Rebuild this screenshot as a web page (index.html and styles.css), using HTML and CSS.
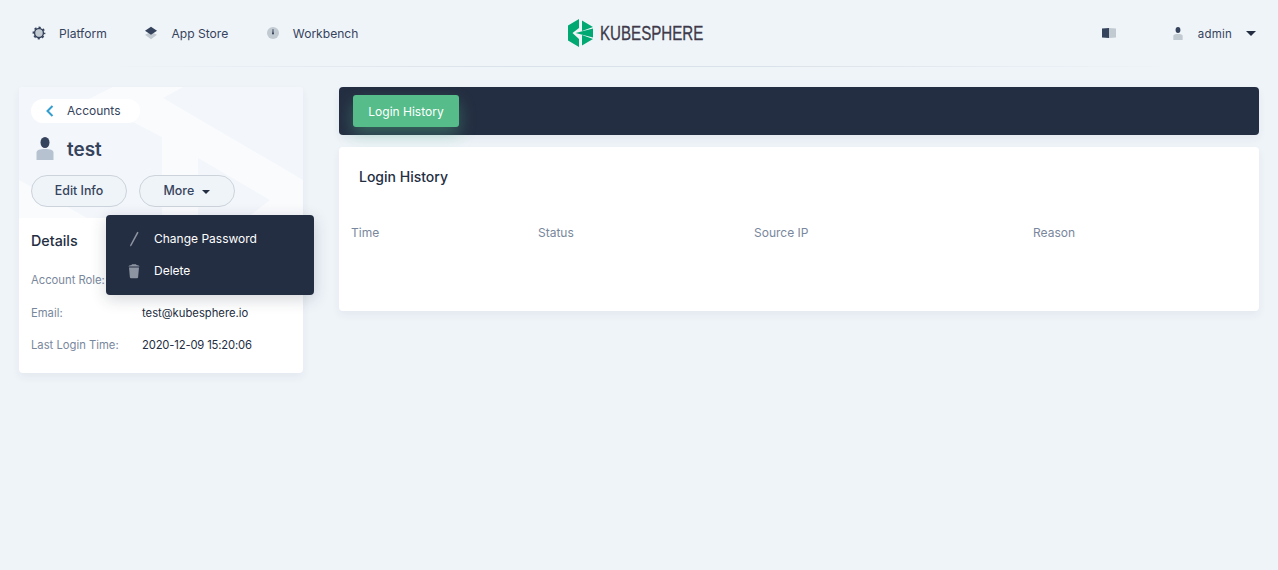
FILE: index.html
```html
<!DOCTYPE html>
<html lang="en">
<head>
<meta charset="utf-8">
<title>KubeSphere</title>
<link rel="stylesheet" href="styles.css">
</head>
<body>
<header class="topbar">
  <nav class="nav">
    <a class="nav-item">
      <svg class="nav-icon" viewBox="0 0 16 16"><circle cx="8" cy="8" r="3.600" fill="#c1c9d1"/><circle cx="8" cy="8" r="4.400" fill="none" stroke="#36435c" stroke-width="1.500"/><circle cx="8" cy="8" r="5.600" fill="none" stroke="#36435c" stroke-width="1.600" stroke-dasharray="2.200 2.198" stroke-dashoffset="1.100"/></svg>
      <span>Platform</span>
    </a>
    <a class="nav-item">
      <svg class="nav-icon" viewBox="0 0 16 16"><path d="M2 9.800 8 7l6 2.800L8 14.200z" fill="#c1c9d1"/><path d="M2 5.800 8 1.800l6 4L8 9.800z" fill="#36435c"/></svg>
      <span>App Store</span>
    </a>
    <a class="nav-item">
      <svg class="nav-icon" viewBox="0 0 16 16"><circle cx="8" cy="8" r="6" fill="#c1c9d1"/><path d="M7.600 4h.8l.300 4.800H7.300z" fill="#36435c"/><circle cx="8" cy="8.600" r="1" fill="#36435c"/></svg>
      <span>Workbench</span>
    </a>
  </nav>
  <div class="logo">
    <svg class="logo-mark" viewBox="0 0 25 28"><path d="M11 0v9L4.500 14 11 20v8L0 21.500v-15z" fill="#00a971"/><path d="M14 1.500 25 8 14 12zM7.500 14 25 9.500v9zM14 16l11 4-11 6.500z" fill="#00a971"/></svg>
    <span class="logo-text">KUBESPHERE</span>
  </div>
  <div class="user-area">
    <svg class="book-icon" viewBox="0 0 14 10"><path d="M0 .5 7 0v10l-7-.5z" fill="#36435c"/><path d="M7 0l7 .5v9L7 10z" fill="#c1c9d1"/></svg>
    <svg class="user-icon" viewBox="1 0 10 14"><ellipse cx="6" cy="3.200" rx="2.600" ry="3.200" fill="#36435c"/><path d="M1 14V9.500C1 8 3 7.500 6 7.500s5 .5 5 2V14z" fill="#c1c9d1"/></svg>
    <span class="user-name">admin</span>
    <span class="caret caret-dark"></span>
  </div>
</header>

<main class="page">
  <aside class="sidebar">
    <section class="profile">
      <svg class="watermark" viewBox="0 0 284 131">
        <path d="M94 0 70 12 114 35 143 50V131H179V71L251 113 228 131H284V93L144 11 164 0zM0 93 68 131H0z" fill="#fafbfd"/>
      </svg>
      <a class="back-pill">
        <svg class="back-icon" viewBox="0 0 8 12"><path d="M6.500 1 1.500 6l5 5" fill="none" stroke="#329dce" stroke-width="2"/></svg>
        <span>Accounts</span>
      </a>
      <div class="identity">
        <svg class="avatar" viewBox="0 0 18 23"><ellipse cx="9" cy="5.500" rx="4.500" ry="5.500" fill="#36435c"/><path d="M.500 23v-7.500C.500 13 4 12 9 12s8.500 1 8.500 3.500V23z" fill="#b6c2cf"/></svg>
        <h1 class="name">test</h1>
      </div>
      <div class="actions">
        <button class="btn">Edit Info</button>
        <button class="btn">More <span class="caret caret-small"></span></button>
      </div>
    </section>
    <section class="details">
      <h2 class="details-title">Details</h2>
      <dl class="detail-list">
        <div class="detail-row"><dt>Account Role:</dt><dd></dd></div>
        <div class="detail-row"><dt>Email:</dt><dd>test@kubesphere.io</dd></div>
        <div class="detail-row"><dt>Last Login Time:</dt><dd class="detail-date">2020-12-09 15:20:06</dd></div>
      </dl>
    </section>
    <div class="menu">
      <div class="menu-item">
        <svg class="menu-icon" viewBox="0 0 12 16"><path d="M9.200.8 10.600 1.500 3.400 14.800 2 15.400l.300-1.600z" fill="#8d95a3"/></svg>
        <span>Change Password</span>
      </div>
      <div class="menu-item">
        <svg class="menu-icon" viewBox="0 0 12 16"><path d="M4 1.200h4l.500.800C10 2.200 11.500 2.700 11.500 3.500H.500C.500 2.700 2 2.200 3.500 2z" fill="#8d95a3"/><path d="M1 4.500h10l-.900 9.800c-.100.600-.500.900-1.100.900H3c-.600 0-1-.300-1.100-.900z" fill="#8d95a3"/></svg>
        <span>Delete</span>
      </div>
    </div>
  </aside>

  <div class="content">
    <div class="tabs"><a class="tab">Login History</a></div>
    <section class="panel">
      <h2 class="panel-title">Login History</h2>
      <div class="table-head">
        <span>Time</span>
        <span>Status</span>
        <span>Source IP</span>
        <span>Reason</span>
      </div>
    </section>
  </div>
</main>
</body>
</html>
```

FILE: styles.css
```css
* { box-sizing: border-box; }
html, body { margin: 0; height: 100%; }
body {
  background: #eff4f9;
  font-family: Inter, "Liberation Sans", sans-serif;
  font-size: 12px;
  line-height: 20px;
  color: #242e42;
  overflow: hidden;
}
.topbar {
  height: 67px;
  display: grid;
  grid-template-columns: 1fr auto 1fr;
  align-items: center;
  border-bottom: 1px solid transparent;
  border-image: linear-gradient(90deg, rgba(209,215,223,0) 8%, #dbe1e8 40%, #dbe1e8 60%, rgba(209,215,223,0) 92%) 1;
}
.nav { display: flex; align-items: center; padding: 1px 0 0 31px; }
.nav-item { display: flex; align-items: center; gap: 12px; margin-right: 36.600px; color: #36435c; font-size: 12.100px; }
.nav-icon { width: 16px; height: 16px; margin-top: -1px; }
.logo { display: flex; align-items: center; gap: 7px; margin-left: -7px; }
.logo-mark { width: 25px; height: 28px; }
.logo-text { display: inline-block; width: 103px; white-space: nowrap; font-family: "Liberation Sans", sans-serif; font-size: 19.500px; line-height: 28px; color: #3e3a4a; -webkit-text-stroke: .3px #3e3a4a; transform: scaleX(.775); transform-origin: 0 50%; }
.user-area { display: flex; align-items: center; justify-content: flex-end; padding: 1px 22px 0 0; }
.book-icon { width: 14px; height: 10px; margin: -1px 57px 0 0; }
.user-icon { width: 10px; height: 13px; margin: -1px 15px 0 0; }
.user-name { font-size: 11.5px; color: #36435c; margin-right: 14px; letter-spacing: .2px; }
.caret { display: inline-block; width: 0; height: 0; border-style: solid; border-color: #242e42 transparent transparent; }
.caret-dark { border-width: 5px 5px 0; }
.caret-small { border-width: 4.500px 4.500px 0; margin-left: 5px; vertical-align: 1px; }

.page { display: flex; align-items: flex-start; gap: 36px; padding: 20px 19px 0; }
.sidebar { position: relative; width: 284px; flex: none; background: #fff; border-radius: 4px; box-shadow: 0 4px 8px rgba(36,46,66,.06); }
.profile { position: relative; height: 131px; background: #f3f6fb; border-radius: 4px 4px 0 0; padding: 12px; overflow: hidden; }
.watermark { position: absolute; inset: 0; width: 100%; height: 100%; }
.back-pill { position: relative; display: inline-flex; align-items: center; gap: 13px; height: 24px; width: 109px; padding-left: 15px; border-radius: 12px; background: #fff; color: #36435c; }
.back-icon { width: 8px; height: 12px; }
.identity { position: relative; display: flex; align-items: center; gap: 13px; margin: 12px 0 0 5px; height: 28px; }
.avatar { width: 18px; height: 23px; margin-top: -2px; }
.name { margin: 2px 0 0; font-size: 18.900px; font-weight: 600; line-height: 28px; color: #36435c; }
.actions { position: relative; display: flex; gap: 12px; margin-top: 12px; }
.btn { width: 96px; height: 32px; border-radius: 16px; border: 1px solid #ccd3db; background: #eff4f9; color: #36435c; font: 450 12.400px/20px Inter, sans-serif; padding: 0; }

.details { padding: 13px 12px 13.500px; }
.details-title { margin: 0; font-size: 14.300px; line-height: 20px; font-weight: 500; color: #242e42; }
.detail-list { margin: 12.500px 0 0; font-size: 11.250px; }
.detail-row { display: flex; height: 33px; align-items: center; }
.detail-row:last-child { height: 30px; }
.detail-row dt { width: 111px; color: #79879c; }
.detail-row dd { margin: 0; color: #242e42; }
.detail-row .detail-date { letter-spacing: -.16px; }

.menu { position: absolute; left: 87px; top: 128px; width: 208px; height: 80px; padding: 8px 0; background: #242e42; border-radius: 4px; box-shadow: 0 4px 16px rgba(36,46,66,.2); color: #fff; }
.menu-item { display: flex; align-items: center; gap: 14px; height: 32px; padding-left: 22px; }
.menu-icon { width: 12px; height: 16px; }

.content { flex: 1; display: flex; flex-direction: column; gap: 12px; min-width: 0; }
.tabs { height: 48px; background: #242e42; border-radius: 4px; padding: 8px 14px; box-shadow: 0 4px 8px rgba(36,46,66,.06); }
.tab { display: inline-flex; align-items: center; justify-content: center; width: 106px; height: 32px; padding-top: 1px; background: #55bc8a; color: #fff; border-radius: 3px; box-shadow: 0 8px 16px rgba(85,188,138,.36); }
.panel { height: 164px; background: #fff; border-radius: 4px; box-shadow: 0 4px 8px rgba(36,46,66,.06); }
.panel-title { margin: 0; padding: 20px 20px 0; font-size: 14px; font-weight: 500; line-height: 20px; color: #242e42; }
.table-head { display: grid; grid-template-columns: 187px 216px 279px 1fr; padding: 36px 12px 0; color: #79879c; }
```
